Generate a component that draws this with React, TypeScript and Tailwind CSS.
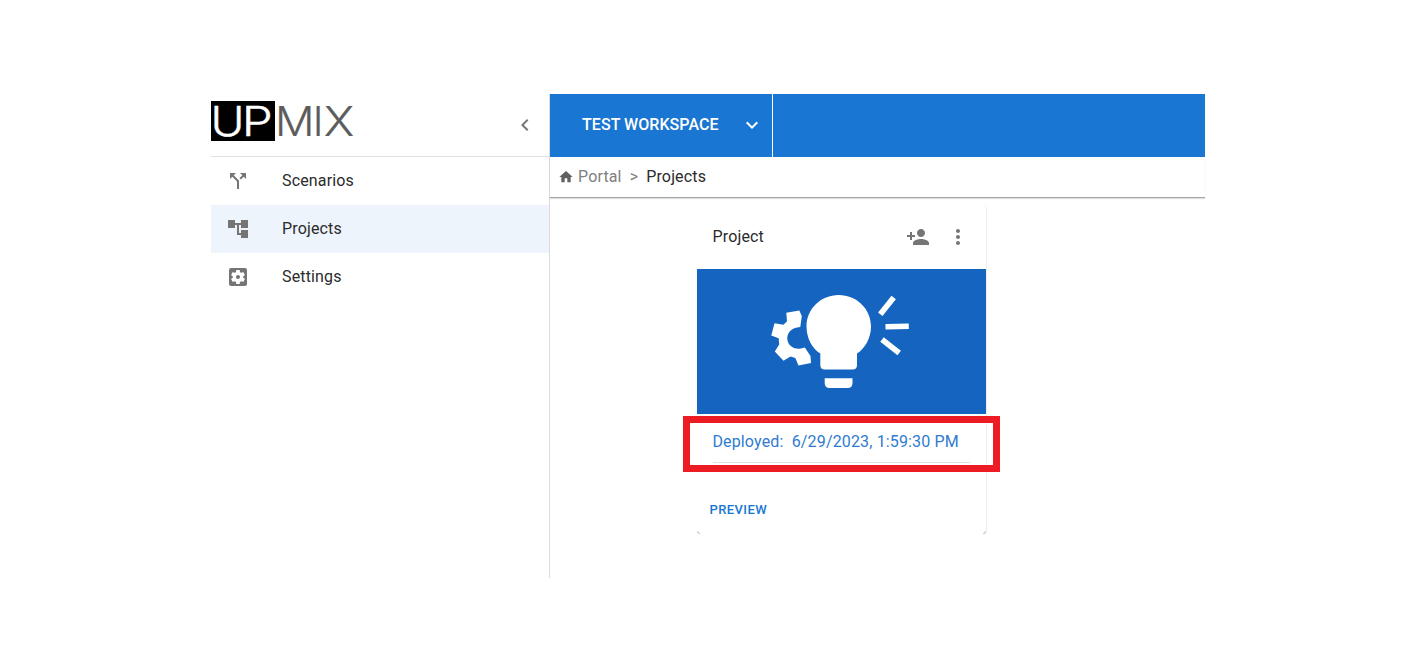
import type { ReactNode } from "react";
import {
  MdAccountTree,
  MdCallSplit,
  MdChevronLeft,
  MdExpandMore,
  MdHome,
  MdMoreVert,
  MdPersonAdd,
  MdSettingsApplications,
} from "react-icons/md";

function Logo() {
  return (
    <svg width="144" height="40" viewBox="0 0 144 40" className="mt-[7px] block overflow-visible" role="img" aria-label="UPMIX">
      <rect width="64" height="40" fill="#000" />
      <g fontFamily="Inter, sans-serif" fontSize="41" fontWeight="300">
        <g fill="#fff" stroke="#fff" strokeWidth="0.4">
          <text x="-0.5" y="35" textLength="34" lengthAdjust="spacingAndGlyphs">U</text>
          <text x="30.7" y="35" textLength="31" lengthAdjust="spacingAndGlyphs">P</text>
        </g>
        <g fill="#5c5c5c" stroke="#5c5c5c" strokeWidth="0.2">
          <text x="64" y="35.3" textLength="39.5" lengthAdjust="spacingAndGlyphs">M</text>
          <text x="101.8" y="35.3">I</text>
          <text x="112.7" y="35.3" textLength="30.5" lengthAdjust="spacingAndGlyphs">X</text>
        </g>
      </g>
    </svg>
  );
}

function IdeaArt() {
  return (
    <svg width="160" height="120" viewBox="0 0 160 120" className="ml-[63px] mt-[11px] block" fill="#fff" aria-hidden="true">
      <path d="M26.3 32.8 L39.3 30.5 L41.8 36 L40.3 47 C31 47.5 27 53 27.3 59 C27.8 65 33 69.7 41 68.5 L44.8 67.5 L50.5 76 L51 83 L38.5 85.5 L35.3 78 L30.5 76.5 L23.5 80.7 L14.8 71.5 L19.2 64.5 L18.7 58.3 L11.3 55.5 L14.5 43.3 L23.5 44.7 L27 41.2 Z" />
      <path d="M78.7 15 C96.7 15 111 29 111 46.5 C111 58 105 68.5 97 73.5 V85 Q97 89.5 92.5 89.5 H65 Q60.3 89.5 60.3 85 V73.5 C52 68.5 46.5 58 46.5 46.5 C46.5 29 60.7 15 78.7 15 Z" />
      <path d="M64.7 98.3 H92.5 V103 Q92.5 108 87.5 108 H69.7 Q64.7 108 64.7 103 Z" />
      <path d="M120.3 34.3 L133.7 17.4 M125.5 46.7 L148.8 46.2 M122 59.5 L139.2 73" stroke="#fff" strokeWidth="5.6" fill="none" />
    </svg>
  );
}

function NavItem({ icon, label, active = false }: { icon: ReactNode; label: string; active?: boolean }) {
  return (
    <a className={`flex h-12 items-center pl-[15px] ${active ? "bg-[#edf4fc]" : ""}`}>
      <span className="w-14 text-2xl text-[#757575]">{icon}</span>
      <span className="text-base tracking-[0.15px] text-[#2b2b2b]">{label}</span>
    </a>
  );
}

function Sidebar() {
  return (
    <aside className="w-[339px] border-r border-[#dcdcdc]">
      <div className="flex h-[63px] justify-between border-b border-[#e0e0e0] pr-3">
        <Logo />
        <MdChevronLeft className="mt-[19px] text-2xl text-[#757575]" />
      </div>
      <nav>
        <NavItem icon={<MdCallSplit />} label="Scenarios" />
        <NavItem icon={<MdAccountTree />} label="Projects" active />
        <NavItem icon={<MdSettingsApplications />} label="Settings" />
      </nav>
    </aside>
  );
}

function ProjectCard() {
  return (
    <article className="relative ml-[147px] mt-[7px] flex h-[329px] w-[289px] flex-col rounded shadow-[1px_0_1px_rgba(0,0,0,0.08)]">
      <header className="flex h-16 items-center pl-[15.5px] pr-4 text-[#757575]">
        <h2 className="grow text-base tracking-[0.15px] text-[#2b2b2b]">Project</h2>
        <MdPersonAdd className="mr-4 text-2xl" />
        <MdMoreVert className="text-2xl" />
      </header>
      <div className="h-[145px] bg-[#1565c0]">
        <IdeaArt />
      </div>
      <p className="mx-4 h-[49px] whitespace-pre border-b border-[#e0e0e0] pt-4 -indent-[0.6px] text-base tracking-[0.15px] text-[#2f7bd0]">
        {"Deployed:  6/29/2023, 1:59:30 PM"}
      </p>
      <button className="ml-[12.5px] mt-9 self-start text-[13px] leading-[22px] font-medium tracking-[0.4px] text-[#1976d2]">
        PREVIEW
      </button>
      <div className="mt-auto flex justify-between">
        <span className="size-[3px] rounded-bl-[3px] border-b border-l border-[#c8c8c8]" />
        <span className="size-[3px] rounded-br-[3px] border-b border-r border-[#c8c8c8]" />
      </div>
      <div className="absolute -left-[14px] top-[211px] h-14 w-[317px] border-7 border-[#ed1c24]" />
    </article>
  );
}

export default function App() {
  return (
    <div className="h-[672px] w-[1416px] bg-white pl-[211px] pt-[94px] font-['Roboto',sans-serif]">
      <div className="flex h-[484px] w-[994px]">
        <Sidebar />
        <main className="grow">
          <div className="flex h-[63px] bg-[#1976d2] text-white">
            <button className="flex w-[223px] items-center justify-between border-r border-white pb-px pl-8 pr-2">
              <span className="text-base font-medium tracking-[0.05px]">TEST WORKSPACE</span>
              <MdExpandMore className="text-2xl" />
            </button>
          </div>
          <div className="flex h-[41px] items-center border-b border-[#a6a6a6] pl-2 text-base tracking-[0.15px] text-[#808080] shadow-[0_1px_1px_rgba(0,0,0,0.12)]">
            <MdHome className="mr-1 text-base text-[#616161]" />
            <span>Portal</span>
            <span className="mx-2 text-base">&gt;</span>
            <span className="text-[#2b2b2b]">Projects</span>
          </div>
          <ProjectCard />
        </main>
      </div>
    </div>
  );
}
